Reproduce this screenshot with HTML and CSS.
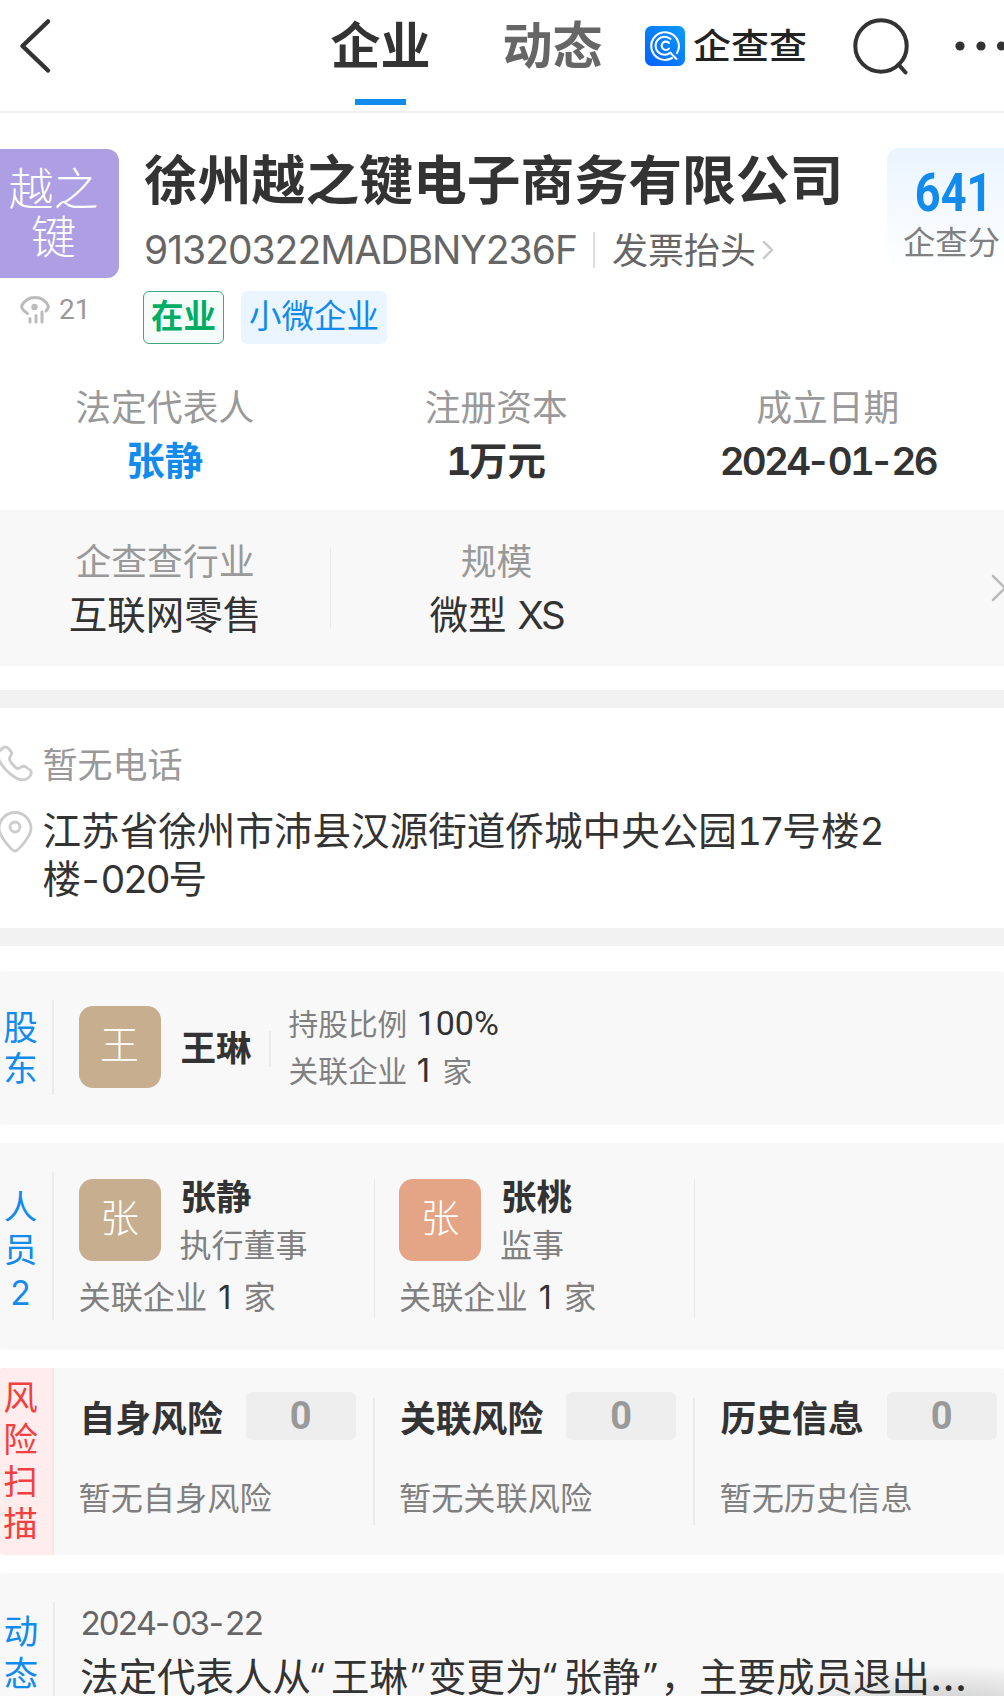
FILE: index.html
```html
<!DOCTYPE html>
<html lang="zh-CN">
<head>
    <meta charset="UTF-8">
    <meta name="viewport" content="width=device-width, initial-scale=1.0">
    <title>徐州越之键电子商务有限公司</title>
    <link rel="stylesheet" href="styles.css">
</head>
<body>
    <header class="navbar">
        <svg class="back-icon" viewBox="0 0 36 56"><path d="M30 3.500 4.500 28 30 52.500"/></svg>
        <nav class="tabs">
            <a class="tab active">企业</a>
            <a class="tab">动态</a>
        </nav>
        <div class="brand">
            <svg class="brand-icon" viewBox="0 0 40 40">
                <defs>
                    <linearGradient id="brandBlue" x1="0" y1="1" x2="1" y2="0">
                        <stop offset="0" stop-color="#0560fd"/>
                        <stop offset="1" stop-color="#0a9cff"/>
                    </linearGradient>
                </defs>
                <rect width="40" height="40" rx="6.500" fill="url(#brandBlue)"/>
                <g fill="none" stroke="#fff" stroke-width="2.100">
                    <path d="M32 27A13.800 13.800 0 1 0 27 32M26 27.500 31.500 33"/>
                    <path d="M25.500 13A9 9 0 1 0 25.500 26.500"/>
                    <path d="M24 17A4.200 4.200 0 1 0 24 22.600"/>
                </g>
            </svg>
            <span class="brand-name">企查查</span>
        </div>
        <svg class="search-icon" viewBox="0 0 60 60"><circle cx="29" cy="28" r="25.700"/><path d="M46.500 46.500 53.500 54.500"/></svg>
        <svg class="more-icon" viewBox="0 0 52 12"><circle cx="6" cy="6" r="4.600"/><circle cx="27" cy="6" r="4.600"/><circle cx="47.500" cy="6" r="4.600"/></svg>
    </header>

    <section class="company">
        <div class="company-side">
            <div class="company-logo">越之<br>键</div>
            <div class="views">
                <svg class="eye-icon" viewBox="0 0 32 30">
                    <path d="M8.500 18.500C5.500 16.500 3 14 2.500 11.500 5 6 10 2.500 16 2.500S27 6 29.500 11.500C29 13.500 28 15 27 16"/>
                    <circle cx="15.500" cy="12" r="3.200"/>
                    <path d="M11 23.500V27M17 20.500V27M23 17V27"/>
                </svg>
                <span class="views-count">21</span>
            </div>
        </div>
        <div class="company-main">
            <h1 class="company-name">徐州越之键电子商务有限公司</h1>
            <div class="company-code">
                <span class="code">91320322MADBNY236F</span>
                <span class="invoice">发票抬头</span>
                <svg class="arrow-small" viewBox="0 0 12 20"><path d="M2 2 10 10 2 18"/></svg>
            </div>
            <div class="tags">
                <span class="tag tag-green">在业</span>
                <span class="tag tag-blue">小微企业</span>
            </div>
        </div>
        <div class="score">
            <div class="score-value">641</div>
            <div class="score-label">企查分</div>
        </div>
    </section>

    <section class="facts">
        <div class="fact">
            <div class="fact-label">法定代表人</div>
            <div class="fact-value link">张静</div>
        </div>
        <div class="fact">
            <div class="fact-label">注册资本</div>
            <div class="fact-value"><span class="num">1</span>万元</div>
        </div>
        <div class="fact">
            <div class="fact-label">成立日期</div>
            <div class="fact-value num">2024<span class="dash">-</span>01<span class="dash">-</span>26</div>
        </div>
    </section>

    <section class="facts industry">
        <div class="fact with-line">
            <div class="fact-label">企查查行业</div>
            <div class="fact-value">互联网零售</div>
        </div>
        <div class="fact">
            <div class="fact-label">规模</div>
            <div class="fact-value">微型 <span class="num">XS</span></div>
        </div>
        <svg class="arrow-large" viewBox="0 0 16 30"><path d="M3 3 15 15 3 27"/></svg>
    </section>

    <section class="contact">
        <div class="contact-row phone">
            <svg class="contact-icon" viewBox="0 0 34 42"><path d="M3 5C5 3 7 4 8.500 5.500L11 8.500C12.500 10.500 11.500 12 10 14 8.500 16 9.500 17.500 11.500 20L15 24C17 26 18.500 26 20.500 24.500 22 23.500 24 22.500 26 24L30 27C32 29 31.500 31 30 33 26 38 20 38 13 33 6 28 0 20-2 14-3 10 0 7 3 5Z"/></svg>
            <span>暂无电话</span>
        </div>
        <div class="contact-row address">
            <svg class="contact-icon" viewBox="0 0 34 42"><path d="M15 40C12 40 -1 25 -1 17.500A16 16 0 0 1 31 17.500C31 25 18 40 15 40Z"/><circle cx="15" cy="16" r="5"/></svg>
            <span>江苏省徐州市沛县汉源街道侨城中央公园<span class="num">17</span>号楼<span class="num">2</span><br>楼<span class="num"><span class="dash">-</span>020</span>号</span>
        </div>
    </section>

    <main class="cards">
        <section class="card card-holder">
            <div class="card-side">股东</div>
            <div class="holder">
                <div class="avatar tan">王</div>
                <div class="person-name">王琳</div>
                <div class="holder-info">
                    <div>持股比例 <b class="ratio">100%</b></div>
                    <div>关联企业 <b>1</b> 家</div>
                </div>
            </div>
        </section>

        <section class="card card-staff">
            <div class="card-side">人员<br>2</div>
            <div class="person">
                <div class="person-top">
                    <div class="avatar tan">张</div>
                    <div>
                        <div class="person-name">张静</div>
                        <div class="person-role">执行董事</div>
                    </div>
                </div>
                <div class="person-link">关联企业 <b>1</b> 家</div>
            </div>
            <div class="person">
                <div class="person-top">
                    <div class="avatar orange">张</div>
                    <div>
                        <div class="person-name">张桃</div>
                        <div class="person-role">监事</div>
                    </div>
                </div>
                <div class="person-link">关联企业 <b>1</b> 家</div>
            </div>
        </section>

        <section class="card card-risk">
            <div class="card-side danger">风险扫描</div>
            <div class="risk">
                <div class="risk-head"><span>自身风险</span><span class="risk-count">0</span></div>
                <div class="risk-text">暂无自身风险</div>
            </div>
            <div class="risk">
                <div class="risk-head"><span>关联风险</span><span class="risk-count">0</span></div>
                <div class="risk-text">暂无关联风险</div>
            </div>
            <div class="risk">
                <div class="risk-head"><span>历史信息</span><span class="risk-count">0</span></div>
                <div class="risk-text">暂无历史信息</div>
            </div>
        </section>

        <section class="card card-news">
            <div class="card-side">动态</div>
            <div class="news">
                <div class="news-date num">2024<span class="dash">-</span>03<span class="dash">-</span>22</div>
                <div class="news-text">法定代表人从<span class="quote-open">“</span>王琳<span class="quote-close">”</span>变更为<span class="quote-open">“</span>张静<span class="quote-close">”</span>，主要成员退出<span class="more">…</span></div>
            </div>
        </section>
    </main>
    <div class="float-shadow"></div>
</body>
</html>
```

FILE: styles.css
```css
:root {
    --blue: #128bed;
    --text: #333;
    --text-mid: #666;
    --text-soft: #808080;
    --text-light: #999;
    --line: #ebebeb;
    --card: #f8f8f8;
    --band: #f2f2f2;
}

* {
    margin: 0;
    padding: 0;
    box-sizing: border-box;
}

body {
    position: relative;
    width: 1004px;
    height: 1696px;
    overflow: hidden;
    background: #fff;
    color: var(--text);
    font-family: Inter, "Noto Sans CJK SC", sans-serif;
}

svg {
    display: block;
    flex: none;
    fill: none;
    stroke-linecap: round;
    stroke-linejoin: round;
}

.num {
    font-variant-numeric: tabular-nums;
    letter-spacing: -0.06em;
}

.dash {
    display: inline-block;
    width: 0.5em;
    font-variant-numeric: normal;
    letter-spacing: 0;
    text-align: center;
}

/* top bar */
.navbar {
    display: flex;
    height: 113px;
    border-bottom: 2px solid #eee;
}

.back-icon {
    width: 36px;
    height: 56px;
    margin: 18px 276px 0 18px;
    stroke: var(--text);
    stroke-width: 4.5;
}

.tabs {
    display: flex;
    gap: 71px;
}

.tab {
    display: flex;
    flex-direction: column;
    align-items: center;
    width: 101px;
    padding-top: 16px;
    font-size: 50px;
    line-height: 60px;
    font-weight: 700;
    color: var(--text-mid);
    white-space: nowrap;
}

.tab.active {
    color: var(--text);
}

.tab.active::after {
    content: '';
    width: 51px;
    height: 6px;
    margin-top: 23px;
    background: var(--blue);
}

.brand {
    display: flex;
    align-items: center;
    height: 40px;
    margin: 26px 0 0 42px;
}

.brand-icon {
    width: 40px;
    height: 40px;
}

.brand-name {
    width: 116px;
    margin-left: 8px;
    font-size: 38px;
    line-height: 40px;
    font-weight: 500;
    color: #222;
    white-space: nowrap;
    transform: scaleY(0.94);
}

.search-icon {
    width: 60px;
    height: 60px;
    margin: 18px 0 0 43px;
    stroke: var(--text);
    stroke-width: 4;
}

.more-icon {
    width: 52px;
    height: 12px;
    margin: 40px 0 0 42px;
    fill: var(--text);
}

/* company head */
.company {
    display: flex;
    height: 271px;
    padding-top: 35px;
}

.company-side {
    width: 144px;
    flex: none;
}

.company-logo {
    width: 131px;
    height: 129px;
    margin: 1px 0 0 -12px;
    padding-top: 17px;
    border-radius: 12px;
    background: #ae9ee4;
    color: #fff;
    font-size: 45px;
    font-weight: 300;
    line-height: 47.5px;
    text-align: center;
}

.views {
    display: flex;
    align-items: center;
    gap: 8px;
    margin: 16px 0 0 19px;
    color: var(--text-light);
}

.views-count {
    font-family: Roboto, sans-serif;
    font-size: 28px;
    line-height: 32px;
}

.eye-icon {
    width: 32px;
    height: 30px;
    stroke: #bbb;
    stroke-width: 3;
}

.eye-icon circle {
    fill: #bbb;
    stroke: none;
}

.company-main {
    width: 743px;
    flex: none;
}

.company-name {
    margin-top: 3px;
    font-size: 53.8px;
    font-weight: 700;
    line-height: 60px;
    white-space: nowrap;
}

.company-code {
    display: flex;
    align-items: center;
    height: 46px;
    margin-top: 16px;
    color: var(--text-mid);
    font-size: 36px;
    white-space: nowrap;
}

.code {
    width: 451px;
    flex: none;
    border-right: 2px solid #ddd;
    font-size: 39px;
    line-height: 36px;
    letter-spacing: -1px;
}

.invoice {
    margin: -4px 0 0 17px;
}

.arrow-small {
    width: 12px;
    height: 20px;
    margin-left: 6px;
    stroke: #ccc;
    stroke-width: 2.5;
}

.tags {
    display: flex;
    gap: 17px;
    margin-top: 18px;
}

.tag {
    height: 53px;
    padding: 0 8px;
    border-radius: 6px;
    font-size: 32.5px;
    line-height: 49px;
    white-space: nowrap;
}

.tag-green {
    margin-left: -1px;
    padding: 0 7px;
    border: 1.5px solid #41a67c;
    background: #f5fcf9;
    color: #00ad65;
    font-weight: 700;
}

.tag-blue {
    background: #ebf5ff;
    color: var(--blue);
    line-height: 52px;
}

.score {
    width: 129px;
    height: 124px;
    flex: none;
    padding-top: 18px;
    border-radius: 12px;
    background: linear-gradient(#eaf4ff, #fff);
    text-align: center;
}

.score-value {
    padding-left: 5px;
    color: var(--blue);
    font-family: Roboto, sans-serif;
    font-size: 53px;
    font-weight: 700;
    line-height: 54px;
    transform: scaleX(0.85);
}

.score-label {
    margin-top: 1px;
    color: var(--text-soft);
    font-size: 32.3px;
    line-height: 44px;
}

/* key facts */
.facts {
    display: flex;
    height: 126px;
    margin-left: -1px;
    padding-top: 1px;
}

.fact {
    width: 331.5px;
    flex: none;
    text-align: center;
}

.fact-label {
    font-size: 35.8px;
    line-height: 46px;
    color: var(--text-light);
}

.fact-value {
    margin-top: 7px;
    font-size: 38.5px;
    line-height: 46px;
    font-weight: 700;
}

.fact-value.link {
    color: var(--blue);
}

.fact-value.num {
    font-weight: 600;
    letter-spacing: -0.07em;
}

.industry {
    height: 156px;
    margin-left: 0;
    padding-top: 29px;
    background: var(--card);
}

.industry .fact {
    width: 331px;
}

.industry .fact-value {
    font-weight: 400;
}

.industry .with-line {
    height: 82px;
    margin-top: 8px;
    border-right: 1px solid var(--line);
}

.with-line .fact-label {
    margin-top: -8px;
}

.arrow-large {
    width: 16px;
    height: 30px;
    margin: 34px 0 0 328px;
    stroke: #bbb;
    stroke-width: 2.5;
}

/* phone and address */
.contact {
    height: 256px;
    margin-top: 24px;
    padding-top: 35px;
    border-top: 18px solid var(--band);
    border-bottom: 18px solid var(--band);
}

.contact-row {
    display: flex;
    gap: 8.5px;
    white-space: nowrap;
}

.contact-icon {
    width: 34px;
    height: 42px;
    stroke: #ccc;
    stroke-width: 2.8;
}

.phone {
    height: 62px;
    font-size: 35px;
    line-height: 44px;
    color: var(--text-light);
}

.address {
    font-size: 38.6px;
    line-height: 48px;
}

.address .contact-icon {
    margin-top: 6px;
}

.address > span {
    margin-top: 2px;
}

/* cards */
.cards {
    display: flex;
    flex-direction: column;
    gap: 18px;
    margin-top: 25px;
}

.card {
    display: flex;
    border-radius: 3px;
    background: var(--card);
    overflow: hidden;
}

.card-side {
    display: flex;
    align-items: center;
    width: 54px;
    flex: none;
    padding: 0 14px 0 3px;
    border-right: 2px solid var(--line);
    color: var(--blue);
    font-size: 34.5px;
    line-height: 42px;
    text-align: center;
    word-break: break-all;
}

.avatar {
    width: 82px;
    height: 82px;
    flex: none;
    border-radius: 14px;
    color: #fff;
    font-size: 39px;
    font-weight: 300;
    line-height: 78px;
    text-align: center;
}

.tan {
    background: #c6ae8e;
}

.orange {
    background: #e3a586;
}

.person-name {
    font-size: 35.5px;
    font-weight: 700;
    line-height: 44px;
}

.card b {
    color: var(--text);
    font-weight: 400;
}

.card-holder {
    height: 154px;
}

.card-holder .card-side {
    height: 95px;
    margin-top: 29px;
    line-height: 41px;
}

.holder {
    display: flex;
    align-items: center;
    height: 152px;
    padding-left: 24.5px;
}

.holder .person-name {
    margin: 3px 0 0 20px;
    padding-right: 17px;
    border-right: 2px solid var(--line);
    line-height: 36px;
}

.holder-info {
    margin-left: 18px;
    font-size: 29.7px;
    line-height: 46.5px;
    color: var(--text-soft);
}

.holder-info b {
    margin: 0 4px 0 1px;
    font-size: 33px;
}

.holder-info .ratio {
    font-family: Roboto, sans-serif;
    font-size: 34px;
}

.card-staff {
    height: 207px;
}

.card-staff .card-side {
    height: 148px;
    margin-top: 29px;
    padding-top: 8px;
    font-size: 33.5px;
    line-height: 43px;
}

.person {
    width: 320.5px;
    height: 139px;
    flex: none;
    margin-top: 36px;
    padding-left: 24.5px;
    border-right: 1.5px solid var(--line);
}

.person-top {
    display: flex;
    gap: 20px;
}

.person-top .person-name {
    margin-top: -3px;
}

.person-role,
.person-link,
.risk-text {
    font-size: 32.2px;
    line-height: 44px;
    color: var(--text-soft);
}

.person-role {
    margin-top: 4px;
    margin-left: -1px;
    font-size: 32px;
}

.person-link {
    margin-top: 8px;
}

.person-link b {
    margin: 0 3px 0 2px;
}

.card-risk {
    height: 187px;
}

.card-side.danger {
    padding-bottom: 2px;
    border-right-color: #ffe4e4;
    background: #ffecec;
    color: #f04040;
}

.risk {
    width: 320.5px;
    height: 127px;
    flex: none;
    margin-top: 30px;
    padding-left: 25.5px;
    border-right: 2px solid var(--line);
}

.risk:last-child {
    border-right: none;
}

.risk-head {
    display: flex;
    align-items: center;
    gap: 23px;
    height: 48px;
    margin-top: -6px;
    font-size: 35.8px;
    font-weight: 700;
    white-space: nowrap;
}

.risk-count {
    width: 110px;
    flex: none;
    border-radius: 6px;
    background: #eee;
    color: var(--text-light);
    font-family: Roboto, sans-serif;
    font-size: 38px;
    line-height: 48px;
    text-align: center;
}

.risk-text {
    margin-top: 37px;
    margin-left: -1px;
}

.card-news {
    height: 200px;
}

.card-news .card-side {
    align-items: flex-start;
    width: 55px;
    height: 160px;
    margin-top: 29px;
    padding-top: 9px;
}

.news {
    padding: 28px 0 0 25px;
    white-space: nowrap;
}

.news-date {
    color: var(--text-mid);
    font-size: 33px;
    line-height: 44px;
    letter-spacing: -0.085em;
}

.news-text {
    margin-top: 8px;
    font-size: 38.5px;
    line-height: 48px;
}

.quote-open,
.quote-close {
    display: inline-block;
    width: 20px;
    font-family: "Open Sans", sans-serif;
    line-height: 1;
}

.quote-close {
    text-align: center;
}

.more {
    font-size: 43px;
    line-height: 1;
}

/* shadow of the floating button below the fold */
.float-shadow {
    position: absolute;
    right: 0;
    bottom: 0;
    width: 220px;
    height: 30px;
    background: radial-gradient(ellipse at 75% 120%, rgba(0, 0, 0, 0.16), transparent 75%);
}
```
